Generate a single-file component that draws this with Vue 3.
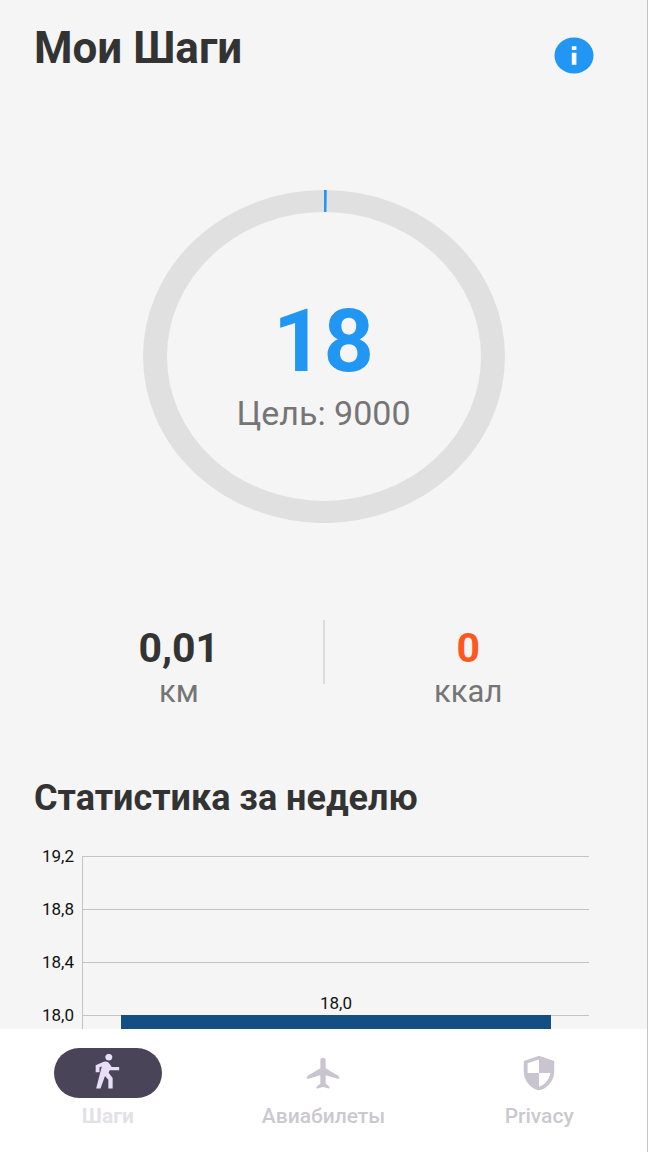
<script setup>
import { computed } from 'vue'

const steps = 18
const goal = 9000

const stats = [
  { value: '0,01', unit: 'км', accent: false },
  { value: '0', unit: 'ккал', accent: true },
]

const ticks = ['19,2', '18,8', '18,4', '18,0']

const tabs = [
  {
    id: 'steps',
    label: 'Шаги',
    viewBox: '1 1.5 24 24',
    path: 'M13.5 5.6c1.1 0 2.1-.9 2.1-2.1s-.9-2.1-2.1-2.1-2.1.9-2.1 2.1.9 2.1 2.1 2.1zM5.6 8.6 10.4 6.4Q12.7 5.6 13.8 7.5L15.2 9.7H19.7V11.7H14L13.4 13.4 15.8 16.6V23.3H13.2V17.8L11.2 15.4 8.5 23.3H5.9L9.3 9.3 7.9 10V13.1H5.6z',
  },
  {
    id: 'flights',
    label: 'Авиабилеты',
    viewBox: '0 0 24 24',
    path: 'M12 2.3c.9 0 1.6.7 1.6 1.6V9l7.3 4.6c.7.5 1 1 .8 1.7-.1.5-.5.6-1 .4l-7.1-2.3V18.8l2 1.5c.5.4.5 1.3-.1 1.5L12 20.9l-3.5.9c-.6-.2-.6-1.1-.1-1.5l2-1.5V13.4l-7.1 2.3c-.5.2-.9.1-1-.4-.2-.7.1-1.2.8-1.7L10.4 9V3.9c0-.9.7-1.6 1.6-1.6z',
  },
  {
    id: 'privacy',
    label: 'Privacy',
    viewBox: '1.5 1 21 22',
    path: 'M12 22q-3.475-.875-5.738-3.988T4 11.1V5l8-3 8 3v6.1q0 3.8-2.262 6.912T12 22zm0-2.1q2.425-.75 4.05-2.963T17.95 12H12V4.125l-6 2.25v5.175q0 .175.05.45H12z',
  },
]
const activeTab = 'steps'

// the stroke never gets thinner than a visible sliver
const progressDash = computed(() => `${Math.max(steps / goal * 100, 0.25)} 100`)
</script>

<template>
  <div class="screen">
    <main class="content">
      <header class="header">
        <h1 class="title">Мои Шаги</h1>
        <button class="info" type="button" aria-label="Информация">
          <svg class="info-icon" viewBox="0 0 40 37" aria-hidden="true">
            <ellipse cx="20" cy="18.5" rx="19.5" ry="18" fill="#2196f3" />
            <path d="M17.8 9.3h4.6v3.8h-4.6zM17.8 15.8h4.6v12h-4.6z" fill="#fff" />
          </svg>
        </button>
      </header>

      <section class="progress">
        <svg class="ring" viewBox="0 0 362 333" preserveAspectRatio="none" aria-hidden="true">
          <g transform="scale(1 0.92)">
            <circle cx="181" cy="181" r="169" fill="none" stroke="#e0e0e0" stroke-width="24" />
            <circle
              cx="181" cy="181" r="169" fill="none" stroke="#2196f3" stroke-width="24"
              pathLength="100" :stroke-dasharray="progressDash" transform="rotate(-90 181 181)"
            />
          </g>
        </svg>
        <div class="progress-text">
          <strong class="count">{{ steps }}</strong>
          <span class="goal">Цель: {{ goal }}</span>
        </div>
      </section>

      <section class="stats">
        <div v-for="stat in stats" :key="stat.unit" class="stat">
          <strong class="stat-value" :class="{ accent: stat.accent }">{{ stat.value }}</strong>
          <span class="stat-unit">{{ stat.unit }}</span>
        </div>
      </section>

      <h2 class="subtitle">Статистика за неделю</h2>

      <section class="chart">
        <div class="axis">
          <span v-for="tick in ticks" :key="tick" class="tick">{{ tick }}</span>
        </div>
        <div class="plot">
          <div v-for="tick in ticks" :key="tick" class="grid-row"></div>
          <div class="bar-slot">
            <span class="bar-label">18,0</span>
            <div class="bar"></div>
          </div>
        </div>
      </section>
    </main>

    <nav class="tabs">
      <button
        v-for="tab in tabs"
        :key="tab.id"
        type="button"
        class="tab"
        :class="{ active: tab.id === activeTab }"
      >
        <span class="tab-pill">
          <svg class="tab-icon" :viewBox="tab.viewBox" preserveAspectRatio="none" aria-hidden="true">
            <path :d="tab.path" fill="currentColor" fill-rule="evenodd" />
          </svg>
        </span>
        <span class="tab-label">{{ tab.label }}</span>
      </button>
    </nav>
  </div>
</template>

<style>
body {
  margin: 0;
}
</style>

<style scoped>
.screen {
  box-sizing: border-box;
  display: flex;
  flex-direction: column;
  height: 100vh;
  border-right: 1px solid #c4c4c4;
  background: #f5f5f5;
  color: #333;
  font-family: Roboto, "Noto Sans", sans-serif;
}

.content {
  flex: 1;
  min-height: 0;
  overflow: hidden;
  padding: 0 34px;
}

.header {
  display: flex;
  justify-content: space-between;
  align-items: flex-start;
  padding: 24px 19px 0 0;
}

.title {
  margin: 0;
  font-size: 44px;
  line-height: 48px;
  font-weight: 700;
}

.info {
  margin-top: 13px;
  padding: 0;
  border: 0;
  background: none;
  cursor: pointer;
}

.info-icon {
  display: block;
  width: 40px;
  height: 37px;
}

/* Progress ring with the counter stacked in its centre */
.progress {
  display: grid;
  place-items: center;
  margin-top: 116px;
}

.ring,
.progress-text {
  grid-area: 1 / 1;
}

.ring {
  width: 362px;
  height: 333px;
}

.progress-text {
  display: flex;
  flex-direction: column;
  align-items: center;
  padding-top: 16px;
}

.count {
  color: #2196f3;
  font-size: 88px;
  line-height: 96px;
}

.goal {
  color: #757575;
  font-size: 34px;
  line-height: 48px;
}

.stats {
  display: grid;
  grid-template-columns: 1fr 1fr;
  margin-top: 97px;
  background: linear-gradient(#dcdcdc, #dcdcdc) center top / 2px 64px no-repeat;
}

.stat {
  display: flex;
  flex-direction: column;
  align-items: center;
  padding-top: 4px;
}

.stat-value {
  font-size: 41px;
  line-height: 48px;
}

.stat-value.accent {
  color: #ff5722;
}

.stat-unit {
  color: #757575;
  font-size: 31px;
  line-height: 40px;
}

.subtitle {
  margin: 62px 0 0;
  font-size: 36px;
  line-height: 48px;
}

.chart {
  display: flex;
  gap: 8px;
  margin: 34px 24px 0 0;
}

.axis {
  display: flex;
  flex-direction: column;
  width: 40px;
  margin-top: -12px;
}

.tick {
  height: 53px;
  color: #111;
  font-size: 17px;
  line-height: 24px;
  text-align: right;
}

.plot {
  position: relative;
  flex: 1;
  border-left: 1px solid #c4c4c4;
}

.grid-row {
  box-sizing: border-box;
  height: 53px;
  border-top: 1px solid #c4c4c4;
}

/* The bar lies over the grid lines */
.bar-slot {
  position: absolute;
  top: 75%;
  bottom: 0;
  left: 38px;
  right: 38px;
  margin-top: -24px;
}

.bar-label {
  display: block;
  color: #111;
  font-size: 17px;
  line-height: 24px;
  text-align: center;
}

.bar {
  height: 53px;
  background: #134f83;
}

.tabs {
  display: grid;
  grid-template-columns: repeat(3, 1fr);
  height: 123px;
  background: #fff;
}

.tab {
  display: flex;
  flex-direction: column;
  align-items: center;
  gap: 6px;
  padding: 19px 0 0;
  border: 0;
  background: none;
  color: #cac4d0;
  font-family: inherit;
  cursor: pointer;
}

.tab-pill {
  display: grid;
  place-items: center;
  width: 108px;
  height: 50px;
  border-radius: 25px;
}

.tab-icon {
  width: 40px;
  height: 38px;
}

.tab-label {
  color: #cbc9cf;
  font-size: 21px;
  line-height: 24px;
  font-weight: 500;
}

.tab.active .tab-pill {
  background: #4a4458;
  color: #e8def8;
}

.tab.active .tab-label {
  color: #e3e1e6;
  font-weight: 700;
}
</style>
